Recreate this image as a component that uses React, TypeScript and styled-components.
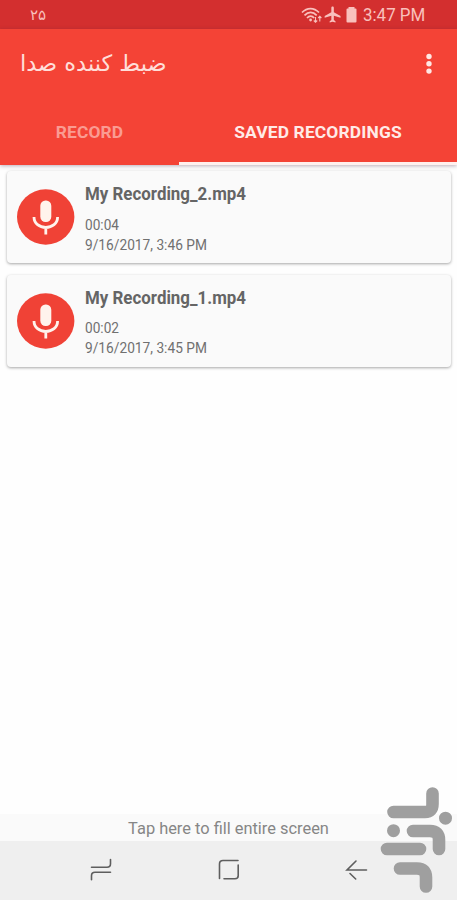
import React from 'react';
import styled, { createGlobalStyle } from 'styled-components';

const GlobalStyle = createGlobalStyle`
    * {
      box-sizing: border-box;
    }
    body {
      margin: 0;
      background: #fefefe;
      font-family: Roboto, "Liberation Sans", sans-serif;
    }
`;

const Screen = styled.div`
    position: relative;
    display: flex;
    flex-direction: column;
    width: 457px;
    height: 900px;
    overflow: hidden;
`;

const StatusBar = styled.div`
    display: flex;
    align-items: center;
    justify-content: space-between;
    height: 29px;
    padding: 0 32px 0 30px;
    background: #d32f2f;
    color: #f9c0bc;
`;

const Notification = styled.span`
    font: 15px "DejaVu Sans", sans-serif;
    line-height: 30px;
`;

const StatusIcons = styled.div`
    display: flex;
    align-items: center;
    height: 29px;
`;

const Clock = styled.span`
    width: 62px;
    margin-left: 4px;
    font-size: 18.5px;
    line-height: 30px;
    white-space: nowrap;
`;

const Header = styled.header`
    height: 136px;
    background: #f44336;
    box-shadow: 0 1px 4px rgba(60, 30, 60, 0.35);
`;

const Toolbar = styled.div`
    display: flex;
    align-items: center;
    justify-content: space-between;
    height: 69px;
    padding: 0 24px 0 20px;
`;

const Title = styled.h1`
    margin: 0;
    padding-bottom: 2px;
    color: #ffded9;
    font: 22.5px "DejaVu Sans", sans-serif;
    white-space: nowrap;
`;

const Tabs = styled.div`
    display: grid;
    grid-template-columns: 179px 1fr;
    height: 67px;
`;

const Tab = styled.div<{ $active?: boolean }>`
    padding-top: 24px;
    border-bottom: 3px solid ${(p) => (p.$active ? '#fff0ee' : 'transparent')};
    color: ${(p) => (p.$active ? '#ffebe8' : '#fa9b92')};
    font-size: 17.4px;
    font-weight: 700;
    letter-spacing: 0.15px;
    line-height: 20px;
    text-align: center;
    white-space: nowrap;
`;

const List = styled.main`
    display: flex;
    flex: 1;
    flex-direction: column;
    gap: 11.5px;
    padding: 6px 6px 0 7px;
`;

const Card = styled.div`
    display: flex;
    height: 92px;
    padding: 0 10px;
    border-radius: 4px;
    background: #fafafa;
    box-shadow: 0 1px 3px rgba(0, 0, 0, 0.35);
`;

const Mic = styled.svg`
    flex: none;
    width: 58px;
    height: 56px;
    margin-top: 18px;
`;

const Details = styled.div`
    margin-left: 10px;
    padding-top: 11px;
    color: #707070;
    white-space: nowrap;
`;

// squeezes the text horizontally, keeping its height
const Condensed = styled.span<{ $scale: number }>`
    display: inline-block;
    transform: scaleX(${(p) => p.$scale});
    transform-origin: left center;
`;

const Name = styled.div`
    color: #656565;
    font-size: 19px;
    font-weight: 700;
    line-height: 23px;
`;

const Length = styled.div`
    margin-top: 9.5px;
    font-size: 15.5px;
    line-height: 20px;
`;

const Date = styled.div`
    font-size: 15.5px;
    line-height: 20px;
`;

const Hint = styled.div`
    height: 27px;
    background: #fafafa;
    color: #868686;
    font-size: 16.4px;
    line-height: 29px;
    text-align: center;
`;

const NavBar = styled.nav`
    display: flex;
    justify-content: space-between;
    height: 59px;
    padding: 17px 89px 0;
    background: #efefef;
`;

const NavIcon = styled.svg`
    width: 24px;
    height: 24px;
    fill: none;
    stroke: #5e5e5e;
    stroke-width: 1.6;
    stroke-linecap: round;
`;

const Logo = styled.svg`
    position: absolute;
    left: 370px;
    top: 775px;
    fill: none;
    stroke: #9f9f9f;
    stroke-width: 12.6;
    stroke-linecap: round;
`;

interface RecordingProps {
    name: string;
    length: string;
    date: string;
}

function Recording({ name, length, date }: RecordingProps) {
    return (
        <Card>
            <Mic viewBox="0 0 58 56">
                <ellipse cx="28.7" cy="28" rx="28.7" ry="27.7" fill="#f04236" />
                <rect x="23.3" y="11.5" width="11" height="21.5" rx="5.2" fill="#fff3ec" />
                <path d="M17 28c0 6.5 5.5 10.5 11.8 10.5s11.8-4 11.8-10.5M28.8 38.5v7" fill="none" stroke="#fff3ec" strokeWidth="2.8" />
            </Mic>
            <Details>
                <Name><Condensed $scale={0.89}>{name}</Condensed></Name>
                <Length><Condensed $scale={0.88}>{length}</Condensed></Length>
                <Date><Condensed $scale={0.885}>{date}</Condensed></Date>
            </Details>
        </Card>
    );
}

function App() {
    return (
        <>
            <GlobalStyle />
            <Screen>
                <StatusBar>
                    <Notification>۲۵</Notification>
                    <StatusIcons>
                        <svg width="22" height="18" viewBox="0 0 22 18" fill="none" stroke="#f9c0bc" strokeWidth="1.7">
                            <path d="M1 6.5C6 1.2 13 1.2 18 6.5M3.5 9.3c3.8-4 8.5-4 12.2 0M6 12c2.2-2.4 5-2.4 7.2 0" />
                            <circle cx="9.6" cy="14" r="1.4" fill="#f9c0bc" stroke="none" />
                            <path d="M14.5 11v5M12.8 14.5l1.7 1.7 1.7-1.7M18.8 15.5v-5M17.2 12l1.6-1.7 1.6 1.7" strokeWidth="1.1" />
                        </svg>
                        <svg width="20" height="19" viewBox="0 0 24 24" preserveAspectRatio="none" fill="#f9c0bc">
                            <path d="M21 16v-2l-8-5V3.5c0-.83-.67-1.5-1.5-1.5S10 2.67 10 3.5V9l-8 5v2l8-2.5V19l-2 1.5V22l3.5-1 3.5 1v-1.5L13 19v-5.5l8 2.5z" />
                        </svg>
                        <svg width="16" height="18" viewBox="0 0 16 18" fill="#f9c0bc">
                            <path d="M5.500 2.500V1h6v1.500h1q1 0 1 1V15.500q0 1-1 1h-8q-1 0-1-1V3.500q0-1 1-1z" />
                        </svg>
                        <Clock><Condensed $scale={0.915}>3:47 PM</Condensed></Clock>
                    </StatusIcons>
                </StatusBar>
                <Header>
                    <Toolbar>
                        <Title dir="rtl">ضبط کننده صدا</Title>
                        <svg width="8" height="22" viewBox="0 0 8 22" fill="#ffe8e4">
                            <circle cx="4" cy="3.5" r="2.7" />
                            <circle cx="4" cy="10.8" r="2.7" />
                            <circle cx="4" cy="18.1" r="2.7" />
                        </svg>
                    </Toolbar>
                    <Tabs>
                        <Tab>RECORD</Tab>
                        <Tab $active>SAVED RECORDINGS</Tab>
                    </Tabs>
                </Header>
                <List>
                    <Recording name="My Recording_2.mp4" length="00:04" date="9/16/2017, 3:46 PM" />
                    <Recording name="My Recording_1.mp4" length="00:02" date="9/16/2017, 3:45 PM" />
                </List>
                <Hint>Tap here to fill entire screen</Hint>
                <NavBar>
                    <NavIcon viewBox="0 0 24 24">
                        <path d="M2.5 9.3H18q3.5 0 3.5-3.5V1.5M21.5 14.2H6q-3.5 0-3.5 3.5v4" />
                    </NavIcon>
                    <NavIcon viewBox="0 0 24 24">
                        <path d="M21 2.5H6q-3.5 0-3.5 3.5v14.5M7 20.7H18q3.2 0 3.2-3V7" />
                    </NavIcon>
                    <NavIcon viewBox="0 0 24 24">
                        <path d="M22.5 12H3L12 3M6 15.5l5.7 5.5" />
                    </NavIcon>
                </NavBar>
                <Logo width="87" height="125" viewBox="0 0 87 125">
                    <path d="M23.5 37H55q7.5 0 7.5-8V18.5M43 56H60q9 0 9 9v9M17 74h33M30 93.5h17q9 0 9 9v9" />
                    <path d="M75.5 43.2h.01M23.5 55.7h.01" strokeWidth="13" />
                </Logo>
            </Screen>
        </>
    );
}

export default App;
